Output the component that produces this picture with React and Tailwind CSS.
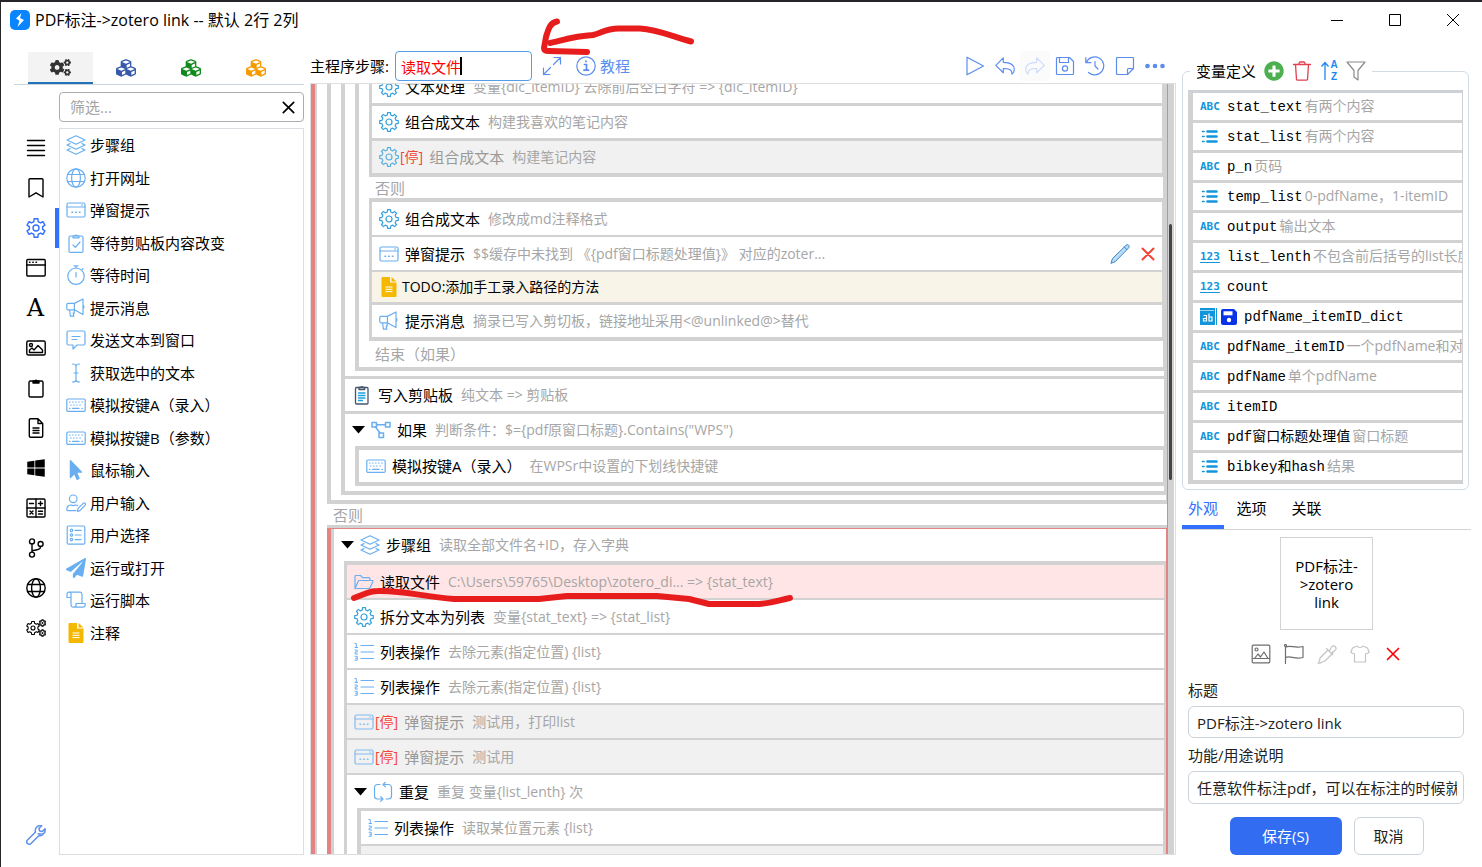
import { useState } from 'react'
import { FaCogs, FaCubes, FaWindows, FaMousePointer, FaPaperPlane, FaPlusCircle } from 'react-icons/fa'

const round = n => Math.round(n * 100) / 100

// outline of a cog wheel
function gear(cx, cy, outer, inner, teeth) {
  const step = (Math.PI * 2) / teeth
  const pts = []
  for (let i = 0; i < teeth; i++) {
    const a = i * step - Math.PI / 2
    ;[[-0.3, inner], [-0.2, outer], [0.2, outer], [0.3, inner]].forEach(([f, r]) => {
      pts.push(`${round(cx + Math.cos(a + f * step) * r)} ${round(cy + Math.sin(a + f * step) * r)}`)
    })
  }
  return `M${pts.join('L')}Z`
}

function Svg({ children, className = 'w-5 h-5', width = 1.2, fill = 'none' }) {
  return (
    <svg viewBox="0 0 20 20" className={`${className} shrink-0`} fill={fill} stroke="currentColor"
      strokeWidth={width} strokeLinecap="round" strokeLinejoin="round" aria-hidden="true">
      {children}
    </svg>
  )
}

const Gear = () => (
  <Svg><path d={gear(10, 10, 9.4, 7.2, 8)} /><circle cx="10" cy="10" r="3" /></Svg>
)
const GearRail = () => (
  <Svg width={1.4}><path d={gear(10, 10, 9.4, 6.8, 6)} /><circle cx="10" cy="10" r="3" /></Svg>
)
const Layers = () => (
  <Svg>
    <path d="M10 .8l9 4.2-9 4.2L1 5z" />
    <path d="M4 8.6L1 10l9 4.2L19 10l-3-1.4" />
    <path d="M4 13.6L1 15l9 4.2 9-4.2-3-1.4" />
  </Svg>
)
const Globe = ({ width = 1.2 }) => (
  <Svg width={width}>
    <circle cx="10" cy="10" r="9.2" />
    <ellipse cx="10" cy="10" rx="4.4" ry="9.2" />
    <path d="M1.6 6.5h16.8M1.6 13.5h16.8" />
  </Svg>
)
const Popup = () => (
  <Svg>
    <rect x="1" y="3" width="18" height="14" rx="1.5" />
    <path d="M1 7h18M15.5 5h1" />
    <path d="M6 12.2h.6M9.7 12.2h.6M13.4 12.2h.6" strokeWidth="1.6" />
  </Svg>
)
const ClipCheck = () => (
  <Svg>
    <rect x="3" y="3" width="14" height="16.4" rx="1.5" />
    <path d="M7 4.8V3h1.6a1.5 1.5 0 012.8 0H13v1.8zM7 12l2.4 2.4L14 9" />
  </Svg>
)
const Timer = () => (
  <Svg><circle cx="10" cy="11.2" r="8.2" /><path d="M8 .8h4M10 .8V3M10 7.5v4.5M16 4.6l1-1" /></Svg>
)
const Bullhorn = () => (
  <Svg>
    <path d="M.8 6.6A1.2 1.2 0 012 5.4h6.4L17 1v15.6l-8.6-4.8H2a1.2 1.2 0 01-1.2-1.2zM8.4 5.4v6.4M17 7.2a1.8 1.8 0 010 3.2M3.6 11.8l.8 6.4h3.4l-.6-3h1v-3.2" />
  </Svg>
)
const Message = () => (
  <Svg><path d="M2.5 1h15A1.6 1.6 0 0119 2.6v10.8A1.6 1.6 0 0117.5 15H11l-4 4v-4H2.500A1.6 1.6 0 011 13.400V2.600A1.6 1.6 0 012.5 1zM6 6.500h8M6 9.500h5" /></Svg>
)
const IBeam = () => (
  <Svg><path d="M6.500 1c2 0 3.500.6 3.500 2v14c0 1.400-1.500 2-3.500 2M13.500 1c-2 0-3.500.6-3.500 2M13.500 19c-2 0-3.500-.6-3.500-2M8 10h4" /></Svg>
)
const Keyboard = () => (
  <Svg>
    <rect x=".8" y="4" width="18.4" height="12.4" rx="1.2" />
    <path d="M3.500 7h.6M6.500 7h.6M9.500 7h.6M12.500 7h.6M15.800 7h.6M4.500 10h.6M7.500 10h.6M10.500 10h.6M13.800 10h.6M3.500 13.300h.6M6.500 13.300h6.500M15.800 13.300h.6" />
  </Svg>
)
const UserEdit = () => (
  <Svg>
    <circle cx="7.2" cy="5.8" r="3.8" />
    <path d="M10 17.600H2a1.2 1.2 0 01-1.200-1.200C.8 13.800 2.600 12 5 12c1.500.7 3 .7 4.500 0 .8 0 1.600.2 2.200.6M11.500 18.400l.4-2.700 5.300-5.300a1.3 1.3 0 011.900 1.900l-5.200 5.300z" />
  </Svg>
)
const Choice = () => (
  <Svg>
    <rect x="1.2" y="1" width="17.6" height="18.2" rx="1.2" />
    <circle cx="5.500" cy="5.4" r="1.2" /><circle cx="5.500" cy="10" r="1.2" /><circle cx="5.500" cy="14.6" r="1.2" />
    <path d="M9 5.400h6M9 10h6M9 14.600h6" />
  </Svg>
)
const Scroll = () => (
  <Svg><path d="M4.500 7.500H1V4.200a2 2 0 014 0V15a2.5 2.5 0 002.500 2.200M3 2.200h11A2 2 0 0116 4v8.500M7.500 17.200A2.3 2.3 0 0010 15v-1.500h9.200V15a2.3 2.3 0 01-2.300 2.200z" /></Svg>
)
const Note = () => (
  <svg viewBox="0 0 20 20" className="w-5 h-5 shrink-0" aria-hidden="true">
    <path d="M2.500 1a1 1 0 011-1H11v5.500h6.500V19a1 1 0 01-1 1h-13a1 1 0 01-1-1z" fill="#f5b800" />
    <path d="M12.500 0l5 4.500h-5z" fill="#f5b800" />
    <path d="M6.500 10h7M6.500 12.300h7M6.500 14.600h7" stroke="#fff" />
  </svg>
)
const ClipLines = () => (
  <Svg className="w-5 h-5 text-slate-600" width={1.3}>
    <rect x="3.500" y="2.500" width="12.500" height="16.500" rx="1" />
    <path d="M7 4.500V2.500h1.500a1.5 1.5 0 012.600 0h1.500v2z" />
    <path d="M6.500 8h6.500M6.500 10.500h6.500M6.500 13h6.500M6.500 15.500h4" stroke="#1ba1e2" />
  </Svg>
)
const Branch = () => (
  <Svg width={1.5}>
    <rect x="1" y="2.500" width="4.500" height="4.500" /><rect x="14.500" y="2.500" width="4.500" height="4.500" />
    <rect x="8" y="13" width="4.500" height="4.500" /><path d="M5.500 4.800h9M4.500 7l4.500 6" />
  </Svg>
)
const Folder = () => (
  <Svg><path d="M1 16V4.500A1 1 0 012 3.500h4.500l2 2.200H15a1 1 0 011 1v1.800M1 16.500l3.400-7.400a1 1 0 01.9-.6h13.200a.6.6 0 01.5.9l-3.200 6.500a1.2 1.2 0 01-1 .6z" /></Svg>
)
const Numbered = () => (
  <Svg>
    <path d="M7 3.500h12.500M7 10h12.500M7 16.500h12.500" />
    <path d="M1 1.500h1.300v4M1 5.500h2.600M1 8h2.200v2H1.200v2h2.400M1 14.300h2.200v4H1M1.600 16.300h1.600" strokeWidth="1" />
  </Svg>
)
const Loop = () => (
  <Svg><path d="M7 2.500H4.500a3 3 0 00-3 3V14a3 3 0 003 3H10M7.600 14.600L10 17l-2.400 2.400M13 17h2.500a3 3 0 003-3V5.500a3 3 0 00-3-3H10M12.400.2L10 2.500l2.400 2.400" /></Svg>
)

const tools = [
  ['步骤组', Layers], ['打开网址', Globe], ['弹窗提示', Popup], ['等待剪贴板内容改变', ClipCheck],
  ['等待时间', Timer], ['提示消息', Bullhorn], ['发送文本到窗口', Message], ['获取选中的文本', IBeam],
  ['模拟按键A（录入）', Keyboard], ['模拟按键B（参数）', Keyboard],
  ['鼠标输入', () => <FaMousePointer className="w-5 h-5" />],
  ['用户输入', UserEdit], ['用户选择', Choice],
  ['运行或打开', () => <FaPaperPlane className="w-5 h-5" />],
  ['运行脚本', Scroll], ['注释', Note]
]

const rail = [
  ['列表', <Svg width={1.4}><path d="M1.500 2.500h17M1.500 7.500h17M1.500 12.500h17M1.500 17.500h17" /></Svg>],
  ['收藏', <Svg width={1.4}><path d="M3 19V1.800a1 1 0 011-1h12a1 1 0 011 1V19L10 14.800z" /></Svg>],
  ['步骤', <GearRail />],
  ['窗口', <Svg width={1.4}><rect x=".8" y="1.500" width="18.400" height="16.500" rx="1" /><path d="M.8 7h18.400M3.500 4.300h.5M6.800 4.300h.5M10 4.300h.5" /></Svg>],
  ['文本', <span className="text-2xl leading-6 font-['DejaVu_Serif',serif]">A</span>],
  ['图片', <Svg width={1.4}><rect x=".8" y="3" width="18.400" height="14" rx="1.500" /><circle cx="5" cy="7" r="1.500" /><path d="M3.500 14.500V12l2.500-2 2 2 4-4.500 4.500 4.500v2.500z" /></Svg>],
  ['剪贴板', <Svg width={1.4}><rect x="3" y="3" width="14" height="16" rx="1.500" /><path d="M7 5V3.200h1.500a1.6 1.6 0 013 0H13V5z" fill="currentColor" /></Svg>],
  ['文件', <Svg width={1.4}><path d="M12 .8H4.500a1.2 1.2 0 00-1.200 1.200v16a1.2 1.2 0 001.200 1.200h11a1.2 1.2 0 001.200-1.200V5.500zM12 .8v4.700h4.700M7 10h6M7 12.500h6M7 15h6" /></Svg>],
  ['系统', <FaWindows className="w-5 h-5 shrink-0" />],
  ['计算', <Svg width={1.4}><rect x="1" y="1" width="18" height="18" rx="1" /><path d="M10 1v18M1 10h18M3.500 5.500h4M12.500 5.500h4M14.500 3.500v4M4 13l3 3M7 13l-3 3M12.500 13.300h4M12.500 16h4" /></Svg>],
  ['分支', <Svg width={1.4}><circle cx="6" cy="3.400" r="2.500" /><circle cx="14.600" cy="6" r="2.500" /><circle cx="6" cy="16.600" r="2.500" /><path d="M6 6v8M14.600 8.500c0 3-3 3.500-8.600 4.300" /></Svg>],
  ['网络', <Globe width={1.4} />],
  ['设置', <Svg width={1.1}><path d={gear(7, 10, 6.6, 5, 6)} /><circle cx="7" cy="10" r="2" /><path d={gear(16.5, 5, 3.2, 2.4, 6)} /><path d={gear(16.5, 15, 3.2, 2.4, 6)} /><circle cx="16.500" cy="5" r=".4" /><circle cx="16.500" cy="15" r=".4" /></Svg>]
]

const tabs = [
  ['内置步骤', <FaCogs className="w-[21px] h-[17px]" />, 'text-[#333]'],
  ['公共模块', <FaCubes className="w-5 h-5" />, 'text-[#3659ab]'],
  ['我的模块', <FaCubes className="w-5 h-5" />, 'text-[#0f8a1b]'],
  ['其他模块', <FaCubes className="w-5 h-5" />, 'text-[#f59b00]']
]

const actions = [
  ['运行', <path d="M2 1.200v17.600L18.500 10z" />],
  ['撤销', <path d="M8.300 1.800v4.500c6.500 0 11 2 11 7.200 0 2-1 3.700-2.400 4.700.7-4-2.600-5.700-8.600-5.700v4.300L.8 9.400z" />],
  ['重做', <path d="M11.700 1.800v4.500c-6.500 0-11 2-11 7.200 0 2 1 3.700 2.400 4.700-.7-4 2.600-5.700 8.600-5.700v4.300l7.500-7.400z" />],
  ['保存', <><path d="M1.500 2.500a1 1 0 011-1h12l4 4v12a1 1 0 01-1 1h-15a1 1 0 01-1-1zM4.500 1.500v5h9v-5" /><circle cx="10" cy="12.500" r="2.600" /></>],
  ['历史', <path d="M.8 1.500v5.200H6M1.400 6.500A9 9 0 1 1 3.600 16.500M10 5.500V10l3 3" />],
  ['便签', <path d="M18.500 12.500v-10a1 1 0 00-1-1h-15a1 1 0 00-1 1v15a1 1 0 001 1h10l6-6h-5a1 1 0 00-1 1v5" />],
  ['更多', <g fill="currentColor"><circle cx="2.500" cy="10" r="1.700" /><circle cx="10" cy="10" r="1.700" /><circle cx="17.500" cy="10" r="1.700" /></g>]
]

const vars = [
  ['text', 'stat_text', '有两个内容'],
  ['list', 'stat_list', '有两个内容'],
  ['text', 'p_n', '页码'],
  ['list', 'temp_list', '0-pdfName，1-itemID'],
  ['text', 'output', '输出文本'],
  ['num', 'list_lenth', '不包含前后括号的list长度'],
  ['num', 'count', ''],
  ['dict', 'pdfName_itemID_dict', ''],
  ['text', 'pdfName_itemID', '一个pdfName和对应'],
  ['text', 'pdfName', '单个pdfName'],
  ['text', 'itemID', ''],
  ['text', 'pdf窗口标题处理值', '窗口标题'],
  ['list', 'bibkey和hash', '结果']
]

function VarIcon({ type }) {
  if (type === 'text') return <span className="w-5 text-[11px] leading-4 font-bold font-['DejaVu_Sans_Mono',monospace]">ABC</span>
  if (type === 'num') return <span className="w-5 text-[11px] leading-4 font-bold underline underline-offset-2 font-['DejaVu_Sans_Mono',monospace]">123</span>
  if (type === 'list') {
    return (
      <Svg width={2.6}>
        <path d="M7.500 4.500h9M7.500 9.500h9M7.500 14.500h9" />
        <path d="M2.500 4.500h1.600M2.500 9.500h1.600M2.500 14.500h1.600" strokeWidth="1.6" />
      </Svg>
    )
  }
  return (
    <span className="flex items-center gap-1">
      <svg viewBox="0 0 17 17" className="w-[17px] h-[17px]" aria-hidden="true">
        <path d="M0 0h15v17H0z" fill="#1296db" /><path d="M16.500 0v17M0 2h15" stroke="#1296db" />
        <path d="M0 2.500h14" stroke="#fff" strokeWidth=".6" />
        <path d="M3.500 7.500h3V13h-3v-2.500h3M9 5.500V13h3V9H9" fill="none" stroke="#fff" strokeWidth="1.2" />
      </svg>
      <svg viewBox="0 0 16 16" className="w-4 h-4" aria-hidden="true">
        <path d="M2 0h11l3 3v11a2 2 0 01-2 2H2a2 2 0 01-2-2V2a2 2 0 012-2z" fill="#0a32e6" />
        <path d="M2.500 2.300h9v4h-9z" fill="#fff" /><circle cx="8" cy="11" r="2.200" fill="#fff" />
      </svg>
    </span>
  )
}

function Step({ icon: Icon, title, desc, stopped, className = 'h-[35px] border-b-2', open, children }) {
  return (
    <div className={`flex items-center gap-1.5 pl-[7px] border-[#d2d2d2] whitespace-nowrap ${stopped ? 'bg-[#f1f1f1]' : ''} ${className}`}>
      {open && (
        <button aria-label="折叠" className="w-[13px]">
          <svg viewBox="0 0 13 8" className="w-[13px] h-2"><path d="M0 0h13L6.500 7.500z" /></svg>
        </button>
      )}
      <span className="flex items-center gap-px text-[#69aef0]">
        <span className={`${Icon === Gear ? 'text-[#35a0dc]' : ''} ${stopped ? 'opacity-80' : ''}`}><Icon /></span>
        {stopped && <span className="text-sm text-[#f44336]">[停]</span>}
      </span>
      <span className={stopped ? 'text-[#999]' : ''}>{title}</span>
      <span className="ml-0.5 text-sm text-[#a6a6a6]">{desc}</span>
      {children}
    </div>
  )
}

function Steps() {
  const line = 'border-[#d2d2d2]'
  return (
    <div className="-mt-[13px] border-l-4 border-r border-[#e38383]">
      <div className={`border-l-2 pl-2.5 ${line}`}>
        <div className={`border-l-4 border-r border-b-4 pl-2.5 pb-[5px] ${line}`}>
          <div className={`border-l-4 border-r-2 border-b-4 ${line}`}>
            <div className="pl-2.5 pb-[5px]">
              <div className={`border-l-4 border-r border-b-4 ${line}`}>
                <div className={`ml-2.5 border-l-[3px] border-r border-b-4 ${line}`}>
                  <Step icon={Gear} title="文本处理" desc="变量{dic_itemID} 去除前后空白字符 => {dic_itemID}" className="h-[35px] border-b-[3px]" />
                  <Step icon={Gear} title="组合成文本" desc="构建我喜欢的笔记内容" className="h-[35px] border-b-[3px]" />
                  <Step icon={Gear} title="组合成文本" desc="构建笔记内容" stopped className="h-8" />
                </div>
                <p className="pl-4 h-[21px] flex items-center text-[#a6a6a6]">否则</p>
                <div className={`ml-2.5 border-l-[3px] border-r border-y-4 ${line}`}>
                  <Step icon={Gear} title="组合成文本" desc="修改成md注释格式" />
                  <Step icon={Popup} title="弹窗提示" desc="$$缓存中未找到 《{pdf窗口标题处理值}》 对应的zoter...">
                    <span className="ml-auto pr-1 flex items-center gap-2">
                      <button aria-label="编辑">
                        <Svg className="w-5 h-5 text-[#3f86c6]" fill="#b9dcf7" width={1}>
                          <path d="M1 19l1.500-4.500L16 1.300a1.500 1.500 0 012.700 2.500L5.500 17.400zM14.300 3l2.700 2.700" />
                        </Svg>
                      </button>
                      <button aria-label="删除">
                        <Svg className="w-5 h-5 text-[#f44336]" width={2}><path d="M4.500 4.500l11 11M15.500 4.500l-11 11" /></Svg>
                      </button>
                    </span>
                  </Step>
                  <div className={`h-[33px] border-b-[3px] pl-[7px] flex items-center gap-[3px] bg-[#f8f4e7] text-sm ${line}`}>
                    <Note />TODO:添加手工录入路径的方法
                  </div>
                  <Step icon={Bullhorn} title="提示消息" desc="摘录已写入剪切板，链接地址采用<@unlinked@>替代" className="h-8" />
                </div>
                <p className="pl-4 h-[26px] flex items-center text-[#a6a6a6]">结束（如果）</p>
              </div>
            </div>
            <Step icon={ClipLines} title="写入剪贴板" desc="纯文本 => 剪贴板" className="h-[38px] border-y-[3px]" />
            <Step icon={Branch} title="如果" desc={'判断条件：$={pdf原窗口标题}.Contains("WPS")'} className="h-8" open />
            <div className="pl-2.5 pb-[5px]">
              <div className={`border-l-4 border-r border-y-4 ${line}`}>
                <Step icon={Keyboard} title="模拟按键A（录入）" desc="在WPSr中设置的下划线快捷键" className="h-8" />
              </div>
            </div>
          </div>
        </div>
        <p className={`pl-1.5 h-6 border-b-[3px] flex items-center text-[#a6a6a6] ${line}`}>否则</p>
        <div className="border-l-4 border-r border-t border-[#e38383]">
          <div className={`border-l-[3px] ${line}`}>
            <Step icon={Layers} title="步骤组" desc="读取全部文件名+ID，存入字典" className="h-8" open />
            <div className={`ml-2.5 border-l-[3px] border-r-2 border-t-4 ${line}`}>
              <Step icon={Folder} title="读取文件" desc="C:\Users\59765\Desktop\zotero_di... => {stat_text}" className="h-[35px] border-b-2 bg-[#ffe5e5]" />
              <Step icon={Gear} title="拆分文本为列表" desc="变量{stat_text} => {stat_list}" />
              <Step icon={Numbered} title="列表操作" desc="去除元素(指定位置) {list}" />
              <Step icon={Numbered} title="列表操作" desc="去除元素(指定位置) {list}" />
              <Step icon={Popup} title="弹窗提示" desc="测试用，打印list" stopped />
              <Step icon={Popup} title="弹窗提示" desc="测试用" stopped />
              <Step icon={Loop} title="重复" desc="重复 变量{list_lenth} 次" className="h-[33px]" open />
              <div className={`ml-2.5 border-l-4 border-r border-t-[3px] ${line}`}>
                <Step icon={Numbered} title="列表操作" desc="读取某位置元素 {list}" />
                <div className="h-8 bg-[#f1f1f1]" />
              </div>
            </div>
          </div>
        </div>
      </div>
    </div>
  )
}

function Sidebar() {
  return (
    <div className="w-[303px] shrink-0 flex flex-col pb-3">
      <div className="ml-[13px] pl-[14px] h-[33px] mt-[11px] flex border-b border-[#cdd3dc]">
        {tabs.map(([label, icon, color], i) => (
          <button key={label} aria-label={label}
            className={`w-[65px] flex items-center justify-center ${color} ${i === 0 ? 'bg-[#f3f3f3] border-b-2 border-[#2272b8]' : ''}`}>
            {icon}
          </button>
        ))}
      </div>
      <label className="ml-[58px] mt-[7px] h-[30px] border border-[#abadb3] rounded flex items-center pl-2.5 pr-2">
        <input aria-label="筛选" placeholder="筛选..." className="flex-1 min-w-0 outline-none placeholder:text-[#a3a3a3]" />
        <Svg className="w-[13px] h-[13px]" width={2.6}><path d="M2 2l16 16M18 2L2 18" /></Svg>
      </label>
      <div className="flex-1 min-h-0 mt-1.5 flex">
        <nav className="w-[58px] pl-[15px] flex flex-col">
          {rail.map(([label, icon], i) => (
            <button key={label} aria-label={label}
              className={`h-10 flex items-center justify-center border-r-4 ${i === 2 ? 'text-[#3370ff] border-[#3370ff]' : 'border-transparent'}`}>
              {icon}
            </button>
          ))}
          <button aria-label="工具" className="mt-auto h-10 flex items-center justify-center border-r-4 border-transparent text-[#5f8fea]">
            <Svg width={1.5}><path d="M12.200 8.800L17 9.200a5 5 0 002-5.400l-2.800 2.800-2.600-.6-.6-2.600L15.800.8a5 5 0 00-6.300 6.200L1.500 15a2.4 2.4 0 003.500 3.500l8-8c1.500.4 3 .1 4-1.300" /></Svg>
          </button>
        </nav>
        <ul className="flex-1 border border-[#dadde2]">
          {tools.map(([name, Icon], i) => (
            <li key={name} className={`flex items-center gap-1 pl-1.5 text-[#69aef0] ${i % 2 ? 'h-[33px]' : 'h-8'}`}>
              <Icon /><span className="text-black">{name}</span>
            </li>
          ))}
        </ul>
      </div>
    </div>
  )
}

function Inspector() {
  const [title, setTitle] = useState('PDF标注->zotero link')
  const [desc, setDesc] = useState('任意软件标注pdf，可以在标注的时候就获取')
  return (
    <div className="w-[306px] shrink-0 pl-1.5 pr-[11px] pt-3 flex flex-col">
      <fieldset className="min-w-0 border border-[#d3dce4] rounded-md px-[5px] pb-[5px] pt-px mr-0.5">
        <legend className="ml-0.5 px-1.5 flex items-center gap-2 h-9">
          变量定义
          <button aria-label="添加"><FaPlusCircle className="w-5 h-5 text-[#4caf50]" /></button>
          <button aria-label="删除"><Svg className="w-5 h-5 text-[#e0404f]" width={1.3}><path d="M1.500 3.500h17M6.500 3.500l1.200-2.500h4.600l1.200 2.500M3.500 3.500l1 15a1 1 0 001 .7h9a1 1 0 001-.7l1-15" /></Svg></button>
          <button aria-label="排序" className="flex items-center text-[#1e88f0]">
            <svg viewBox="0 0 10 20" className="w-2.5 h-5" fill="none" stroke="currentColor" strokeWidth="1.3"><path d="M5 19V1.500M1.500 5.500L5 1.500l3.500 4" /></svg>
            <span className="w-2 flex flex-col text-[10px] leading-3 font-bold font-['Liberation_Sans',sans-serif]"><span>A</span><span>Z</span></span>
          </button>
          <button aria-label="过滤"><Svg className="w-5 h-5 text-[#8a8a8a]"><path d="M1 1h18l-7 8.500V19l-4-3V9.500z" /></Svg></button>
        </legend>
        <ul className="border border-[#cdd1d6] border-l-[5px] border-l-[#d2d2d2] border-t-[3px] overflow-hidden">
          {vars.map(([type, name, note]) => (
            <li key={name} className="h-[30px] border-b-[3px] border-[#d2d2d2] pl-[7px] flex items-center gap-[7px] whitespace-nowrap text-[#1296db]">
              <VarIcon type={type} />
              <span className="text-black text-sm font-['Liberation_Mono','Noto_Sans_CJK_SC',monospace]">
                {name}
                <span className="ml-0.5 text-[#a6a6a6] font-['Open_Sans','Noto_Sans_CJK_SC',sans-serif]">{note}</span>
              </span>
            </li>
          ))}
        </ul>
      </fieldset>
      <div className="flex border-b border-[#d3d3d3]">
        <button className="w-[42px] h-[39px] border-b-4 border-[#3370ff] text-[#3370ff]">外观</button>
        <button className="w-[55px] h-9">选项</button>
        <button className="w-[55px] h-9">关联</button>
      </div>
      <div className="mt-[7px] mx-auto w-[93px] h-[93px] border border-[#d3d3d3] flex items-center justify-center text-center leading-[18px]">
        <span className="w-[66px]">PDF标注-<br />&gt;zotero<br />link</span>
      </div>
      <div className="h-12 flex items-center justify-center gap-[13px] text-[#6e6e6e]">
        <button aria-label="图片"><Svg><rect x="1.200" y="1.200" width="17.600" height="17.600" rx="1" /><circle cx="5.500" cy="5.500" r="1.500" /><path d="M1.500 14.500h17M3.500 14.500l3.500-4.500 2.500 3 3.500-5 4 6.500" /></Svg></button>
        <button aria-label="旗帜"><Svg><circle cx="1.500" cy="1.500" r="1" /><path d="M1.500 2.500v17M1.500 3.200c5-2.500 9 1.500 17.500-.7v11c-9 2.500-12-2.500-17.500 0" /></Svg></button>
        <button aria-label="取色" className="text-[#c4c4c4]"><Svg><path d="M11 6L3 14l-.5 3L1 19l2 .3L5 18l3-1 8-8M9.500 4.500l6 6M12.500 6.500L15 2.500a2.500 2.500 0 013.500 3.500l-4 3" /></Svg></button>
        <button aria-label="样式" className="text-[#c4c4c4]"><Svg><path d="M7 2L2.500 4 .8 8.500l3.700 1.500V18h11v-8l3.700-1.500L17.500 4 13 2c-1 2-5 2-6 0z" /></Svg></button>
        <button aria-label="清除" className="text-[#f00]"><Svg width={1.7}><path d="M4.500 4.500l11 11M15.500 4.500l-11 11" /></Svg></button>
      </div>
      <div className="pl-1.5 pr-[7px] flex flex-col text-[#222]">
        <label htmlFor="title" className="h-7 flex items-center pb-1">标题</label>
        <input id="title" value={title} onChange={e => setTitle(e.target.value)}
          className="h-8 w-full border border-[#ccd2da] rounded-md px-2 outline-none" />
        <label htmlFor="desc" className="h-[33px] flex items-center">功能/用途说明</label>
        <input id="desc" value={desc} onChange={e => setDesc(e.target.value)}
          className="h-[33px] w-full border border-[#ccd2da] rounded-md pl-2 pr-1.5 outline-none" />
      </div>
      <div className="mt-[13px] flex justify-center gap-3">
        <button className="w-28 h-[38px] rounded-md bg-[#326cf0] text-white">保存(S)</button>
        <button className="w-[70px] h-[38px] rounded-md border border-[#ccd2da] text-[#222]">取消</button>
      </div>
    </div>
  )
}

export default function App() {
  const [query, setQuery] = useState('读取文件')
  return (
    <div className="relative h-screen overflow-hidden flex flex-col bg-white border-t-2 border-l border-[#24262a] text-[15px] leading-5 text-black font-['Open_Sans','Noto_Sans_CJK_SC',sans-serif]">
      <header className="h-[39px] pb-[3px] shrink-0 flex items-center pl-[9px]">
        <svg viewBox="0 0 20 20" className="w-5 h-5 mr-[5px]" aria-hidden="true">
          <rect width="20" height="20" rx="5" fill="#0a84ff" />
          <path d="M11.500 3L6 8.500l3.500 2.200L7.500 17l6.500-7-4-2z" fill="#fff" />
        </svg>
        <h1 className="text-base leading-5">PDF标注-&gt;zotero link -- 默认 2行 2列</h1>
        <div className="ml-auto flex">
          <button aria-label="最小化" className="w-[58px] h-9 flex items-center justify-center"><svg viewBox="0 0 12 12" className="w-3 h-3" stroke="#000"><path d="M0 6.500h12" /></svg></button>
          <button aria-label="最大化" className="w-[58px] h-9 flex items-center justify-center"><svg viewBox="0 0 12 12" className="w-3 h-3" stroke="#000" fill="none"><path d="M.5.5h11v11H.5z" /></svg></button>
          <button aria-label="关闭" className="w-[58px] h-9 flex items-center justify-center"><svg viewBox="0 0 12 12" className="w-3 h-3" stroke="#000"><path d="M0 0l12 12M12 0L0 12" /></svg></button>
        </div>
      </header>

      <div className="flex-1 min-h-0 flex">
        <Sidebar />

        <main className="flex-1 min-w-0 ml-1.5 pb-3 flex flex-col">
          <div className="h-[42px] pt-2 shrink-0 flex items-center text-[#5b8def]">
            <label htmlFor="query" className="text-black">主程序步骤:</label>
            <span className="relative ml-1.5">
              <input id="query" autoFocus value={query} onChange={e => setQuery(e.target.value)}
                className="block w-[137px] h-[30px] border border-[#569de5] rounded px-[5px] text-[#f00] caret-transparent outline-none" />
              <span className="absolute left-[65px] top-1.5 w-0.5 h-[18px] bg-black" />
            </span>
            <button aria-label="展开" className="ml-2.5"><Svg><path d="M12 1.500h6.500V8M18.500 1.500L11.500 8.500M8 18.500H1.500V12M1.500 18.500l7-7" /></Svg></button>
            <a href="#tutorial" className="ml-3.5 flex items-center gap-1">
              <Svg><circle cx="10" cy="10" r="9.2" /><path d="M8.500 8.500H10.500v5.500M8 14.200h4.500M10 5v.6" strokeWidth="1.7" /></Svg>
              教程
            </a>
            <div className="ml-auto mr-1.5 flex">
              {actions.map(([label, icon]) => (
                <button key={label} aria-label={label} disabled={label === '重做'}
                  className="w-[30px] h-[30px] flex items-center justify-center disabled:bg-[#f4f4f4] disabled:opacity-30">
                  <Svg>{icon}</Svg>
                </button>
              ))}
            </div>
          </div>
          <div className="flex-1 min-h-0 border border-[#dedede] flex">
            <div className="flex-1 min-w-0 h-full overflow-hidden"><Steps /></div>
            <div className="w-1.5 mr-px bg-[#d2d2d2] flex flex-col">
              <div className="mt-[140px] ml-px w-[3px] h-64 rounded-full bg-[#444]" />
            </div>
          </div>
        </main>

        <Inspector />
      </div>

      {/* hand-drawn marks */}
      <svg viewBox="0 0 160 40" className="absolute left-[539px] top-[15px] w-40 h-10 pointer-events-none" fill="none" stroke="#e71d1d" strokeWidth="6" strokeLinecap="round" strokeLinejoin="round">
        <path d="M10 26C20 24 34 19 53 18 62 16 66 11 80 11.500h20c18 1 32 8 51 13" />
        <path d="M17 4.500C9 6 8 14 6 20l-2 11q0 3 5 3l38 1" />
      </svg>
      <svg viewBox="0 0 450 24" className="absolute left-[348px] top-[584px] w-[450px] h-6 pointer-events-none" fill="none" stroke="#e71d1d" strokeWidth="6" strokeLinecap="round" strokeLinejoin="round">
        <path d="M5 12L18 7q5-2 11-2c25-1 45 6 76 8h85l28-3h90l32 3 20 5h50c15-1 20-4 31-6" />
      </svg>
    </div>
  )
}
